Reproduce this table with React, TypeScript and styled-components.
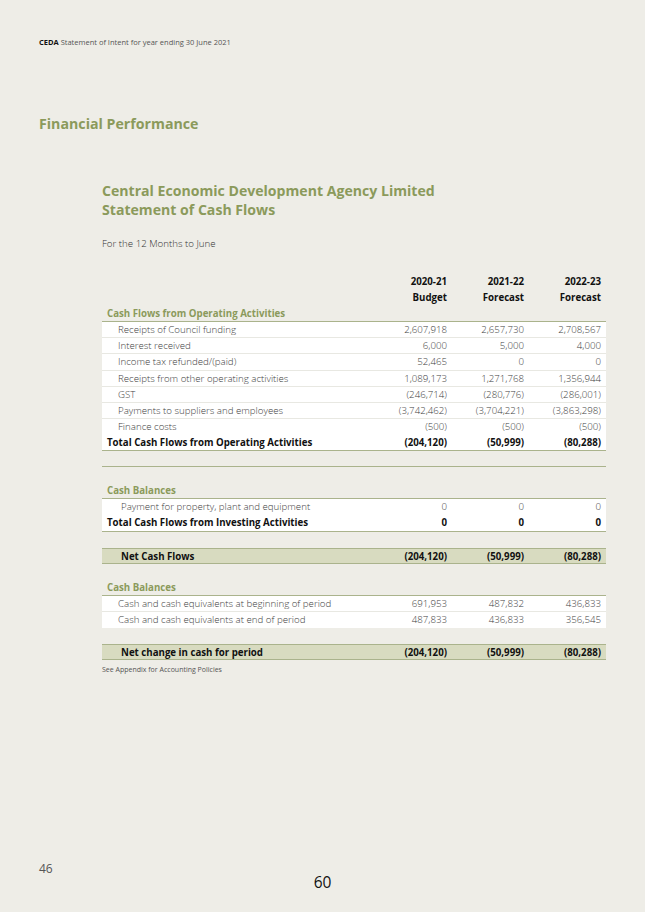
import React from "react";
import styled, { createGlobalStyle } from "styled-components";

const GREEN = "#8b9a5b";
const LINE = "#aab38c";

const Global = createGlobalStyle`
  html, body { margin: 0; padding: 0; background: #eeede7; }
  body { font-family: "Open Sans", "Liberation Sans", sans-serif; }
  * { box-sizing: border-box; }
`;

const Page = styled.div`
  width: 645px;
  height: 912px;
  display: flex;
  flex-direction: column;
  padding: 37px 39px 0 39px;
  overflow: hidden;
`;

const RunningHead = styled.div`
  font-size: 7.5px;
  color: #555;
  line-height: 10px;
  b { color: #111; font-weight: 700; }
`;

const SectionTitle = styled.h1`
  margin: 68px 0 0 0;
  font-size: 14.2px;
  line-height: 18px;
  font-weight: 700;
  color: ${GREEN};
`;

const Body = styled.div`
  margin-left: 63px;
  width: 504px;
`;

const StatementTitle = styled.h2`
  margin: 49px 0 0 0;
  font-size: 14.1px;
  line-height: 18.5px;
  font-weight: 700;
  color: ${GREEN};
`;

const Period = styled.p`
  margin: 19px 0 0 0;
  font-size: 9.7px;
  line-height: 12px;
  font-weight: 300;
  color: #333;
`;

const Table = styled.div`
  margin-top: 24px;
  display: flex;
  flex-direction: column;
`;

type Kind = "head" | "section" | "item" | "total" | "band" | "spacer" | "rule";

const Row = styled.div<{ $kind: Kind; $indent?: number; $last?: boolean }>`
  display: grid;
  grid-template-columns: 1fr 77px 77px 77px;
  height: 16.1px;
  align-items: center;
  font-size: 9.7px;
  line-height: 16px;
  padding-right: 5px;
  padding-left: ${(p) => p.$indent ?? 5}px;
  background: ${(p) =>
    p.$kind === "item" || p.$kind === "total"
      ? "#ffffff"
      : p.$kind === "band"
      ? "#d8dbc0"
      : "transparent"};
  color: ${(p) =>
    p.$kind === "section" ? GREEN : p.$kind === "item" ? "#3e3e3e" : "#111"};
  font-weight: ${(p) => (p.$kind === "item" ? 300 : 700)};
  border-bottom: ${(p) =>
    p.$kind === "section" || p.$kind === "rule" || p.$kind === "total" || p.$kind === "band"
      ? `1.5px solid ${LINE}`
      : p.$kind === "item" && !p.$last
      ? "1px solid #e8e8e2"
      : "none"};
  border-top: ${(p) => (p.$kind === "band" ? `1.5px solid ${LINE}` : "none")};
  & > span:not(:first-child) {
    text-align: right;
  }
`;

const Label = styled.span`
  white-space: nowrap;
`;

const Num = styled.span``;

const Note = styled.p`
  margin: 5px 0 0 0;
  font-size: 7px;
  line-height: 10px;
  font-weight: 400;
  color: #555;
`;

const Footer = styled.div`
  margin-top: auto;
  padding-bottom: 20px;
  display: flex;
  flex-direction: column;
`;

const Folio = styled.div`
  font-size: 12px;
  line-height: 14px;
  color: #555;
`;

const PageNum = styled.div`
  align-self: center;
  margin-top: -4px;
  font-size: 15.5px;
  line-height: 20px;
  color: #111;
`;

type R = { kind: Kind; label?: string; vals?: string[]; indent?: number; last?: boolean };

const rows: R[] = [
  { kind: "head", vals: ["2020-21", "2021-22", "2022-23"] },
  { kind: "head", vals: ["Budget", "Forecast", "Forecast"] },
  { kind: "section", label: "Cash Flows from Operating Activities" },
  { kind: "item", indent: 16, label: "Receipts of Council funding", vals: ["2,607,918", "2,657,730", "2,708,567"] },
  { kind: "item", indent: 16, label: "Interest received", vals: ["6,000", "5,000", "4,000"] },
  { kind: "item", indent: 16, label: "Income tax refunded/(paid)", vals: ["52,465", "0", "0"] },
  { kind: "item", indent: 16, label: "Receipts from other operating activities", vals: ["1,089,173", "1,271,768", "1,356,944"] },
  { kind: "item", indent: 16, label: "GST", vals: ["(246,714)", "(280,776)", "(286,001)"] },
  { kind: "item", indent: 16, label: "Payments to suppliers and employees", vals: ["(3,742,462)", "(3,704,221)", "(3,863,298)"] },
  { kind: "item", indent: 16, label: "Finance costs", vals: ["(500)", "(500)", "(500)"], last: true },
  { kind: "total", label: "Total Cash Flows from Operating Activities", vals: ["(204,120)", "(50,999)", "(80,288)"] },
  { kind: "rule" },
  { kind: "spacer" },
  { kind: "section", label: "Cash Balances" },
  { kind: "item", indent: 19, label: "Payment for property, plant and equipment", vals: ["0", "0", "0"], last: true },
  { kind: "total", label: "Total Cash Flows from Investing Activities", vals: ["0", "0", "0"] },
  { kind: "spacer" },
  { kind: "band", indent: 19, label: "Net Cash Flows", vals: ["(204,120)", "(50,999)", "(80,288)"] },
  { kind: "spacer" },
  { kind: "section", label: "Cash Balances" },
  { kind: "item", indent: 16, label: "Cash and cash equivalents at beginning of period", vals: ["691,953", "487,832", "436,833"] },
  { kind: "item", indent: 16, label: "Cash and cash equivalents at end of period", vals: ["487,833", "436,833", "356,545"], last: true },
  { kind: "spacer" },
  { kind: "band", indent: 19, label: "Net change in cash for period", vals: ["(204,120)", "(50,999)", "(80,288)"] },
];

export default function App() {
  return (
    <>
      <Global />
      <Page>
        <RunningHead>
          <b>CEDA</b> Statement of Intent for year ending 30 June 2021
        </RunningHead>
        <SectionTitle>Financial Performance</SectionTitle>
        <Body>
          <StatementTitle>
            Central Economic Development Agency Limited
            <br />
            Statement of Cash Flows
          </StatementTitle>
          <Period>For the 12 Months to June</Period>
          <Table>
            {rows.map((r, i) => (
              <Row key={i} $kind={r.kind} $indent={r.indent} $last={r.last}>
                <Label>{r.label ?? ""}</Label>
                {(r.vals ?? []).map((v, j) => (
                  <Num key={j}>{v}</Num>
                ))}
              </Row>
            ))}
          </Table>
          <Note>See Appendix for Accounting Policies</Note>
        </Body>
        <Footer>
          <Folio>46</Folio>
          <PageNum>60</PageNum>
        </Footer>
      </Page>
    </>
  );
}
